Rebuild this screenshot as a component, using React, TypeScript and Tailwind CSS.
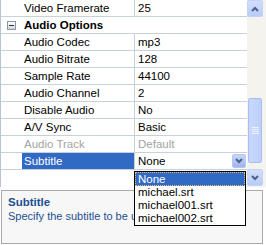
import React from "react";

const font = { fontFamily: '"Liberation Sans", Arial, sans-serif' };

function Row({ name, value, gray, selected }: { name: string; value: string; gray?: boolean; selected?: boolean }) {
  return (
    <div className="flex h-[17px] border-b border-[#c8d0dc]">
      <div className="w-[21px] shrink-0 bg-white" />
      <div
        className={`w-[112px] shrink-0 pl-[2px] leading-[16px] whitespace-nowrap overflow-hidden ${
          selected ? "bg-[#316ac5] text-white" : gray ? "text-[#a3a3a3]" : "text-black"
        }`}
      >
        {name}
      </div>
      <div className="w-px shrink-0 bg-[#c8d0dc]" />
      <div className={`flex-1 pl-[3px] leading-[16px] whitespace-nowrap ${gray ? "text-[#a3a3a3]" : "text-black"}`}>
        {value}
      </div>
    </div>
  );
}

export default function App() {
  return (
    <div className="relative w-[266px] h-[245px] bg-white overflow-hidden text-[11.5px]" style={font}>
      <div className="flex h-[187px]">
        {/* grid */}
        <div className="w-[247px] border-l border-[#b7c3d6] flex flex-col">
          <Row name="Video Framerate" value="25" />
          <div className="flex h-[17px] border-b border-[#c8d0dc] items-center">
            <div className="w-[21px] shrink-0 flex justify-center">
              <div className="w-[9px] h-[9px] border border-[#8c96a6] bg-gradient-to-b from-white to-[#d0d5de] flex items-center justify-center">
                <div className="w-[5px] h-px bg-[#333]" />
              </div>
            </div>
            <div className="pl-[2px] font-bold leading-[16px]">Audio Options</div>
          </div>
          <Row name="Audio Codec" value="mp3" />
          <Row name="Audio Bitrate" value="128" />
          <Row name="Sample Rate" value="44100" />
          <Row name="Audio Channel" value="2" />
          <Row name="Disable Audio" value="No" />
          <Row name="A/V Sync" value="Basic" />
          <Row name="Audio Track" value="Default" gray />
          <div className="relative">
            <Row name="Subtitle" value="None" selected />
            <div className="absolute right-[1px] top-[1px] w-[14px] h-[14px] rounded-[2px] bg-gradient-to-b from-[#c9d6fb] to-[#9fb4ef] border border-[#b3c4f2] flex items-center justify-center">
              <svg width="8" height="6" viewBox="0 0 8 6">
                <path d="M1 1 L4 4 L7 1" stroke="#4d6185" strokeWidth="2" fill="none" />
              </svg>
            </div>
          </div>
        </div>
        {/* scrollbar */}
        <div className="w-[16px] bg-[#f4f3ee] flex flex-col relative">
          <div className="h-[17px] rounded-[2px] bg-gradient-to-b from-[#d3defc] to-[#b8cbf8] border border-[#c3d2fa] flex items-center justify-center">
            <svg width="8" height="6" viewBox="0 0 8 6">
              <path d="M1 5 L4 2 L7 5" stroke="#4d6185" strokeWidth="2" fill="none" />
            </svg>
          </div>
          <div className="h-[81px]" />
          <div className="h-[65px] mx-[1px] rounded-[2px] bg-gradient-to-r from-[#c9d8fd] to-[#bcd0fb] border border-[#a9bdf0] flex flex-col items-center justify-center gap-[1px]">
            <div className="w-[7px] h-px bg-[#eef3ff]" />
            <div className="w-[7px] h-px bg-[#eef3ff]" />
            <div className="w-[7px] h-px bg-[#eef3ff]" />
            <div className="w-[7px] h-px bg-[#eef3ff]" />
          </div>
          <div className="h-[6px]" />
          <div className="h-[17px] rounded-[2px] bg-gradient-to-b from-[#d3defc] to-[#b8cbf8] border border-[#c3d2fa] flex items-center justify-center">
            <svg width="8" height="6" viewBox="0 0 8 6">
              <path d="M1 1 L4 4 L7 1" stroke="#4d6185" strokeWidth="2" fill="none" />
            </svg>
          </div>
        </div>
        <div className="w-[3px] bg-[#f4f3ee]" />
      </div>
      <div className="h-[3px]" />
      {/* description */}
      <div className="ml-[1px] w-[262px] h-[54px] border border-[#a9a9a9] bg-[#f7f7f7] px-[6px] pt-[4px] text-[#1d4f91]">
        <div className="font-bold leading-[14px]">Subtitle</div>
        <div className="leading-[14px] whitespace-nowrap text-[11px]">Specify the subtitle to be used</div>
      </div>
      {/* dropdown list */}
      <div className="absolute left-[134px] top-[171px] w-[112px] border border-black bg-white flex flex-col">
        <div className="h-[14px] leading-[12px] pl-[2px] bg-[#316ac5] text-white border border-dotted border-[#f2c064]">None</div>
        <div className="h-[13px] leading-[13px] pl-[3px]">michael.srt</div>
        <div className="h-[13px] leading-[13px] pl-[3px]">michael001.srt</div>
        <div className="h-[13px] leading-[13px] pl-[3px]">michael002.srt</div>
      </div>
    </div>
  );
}
